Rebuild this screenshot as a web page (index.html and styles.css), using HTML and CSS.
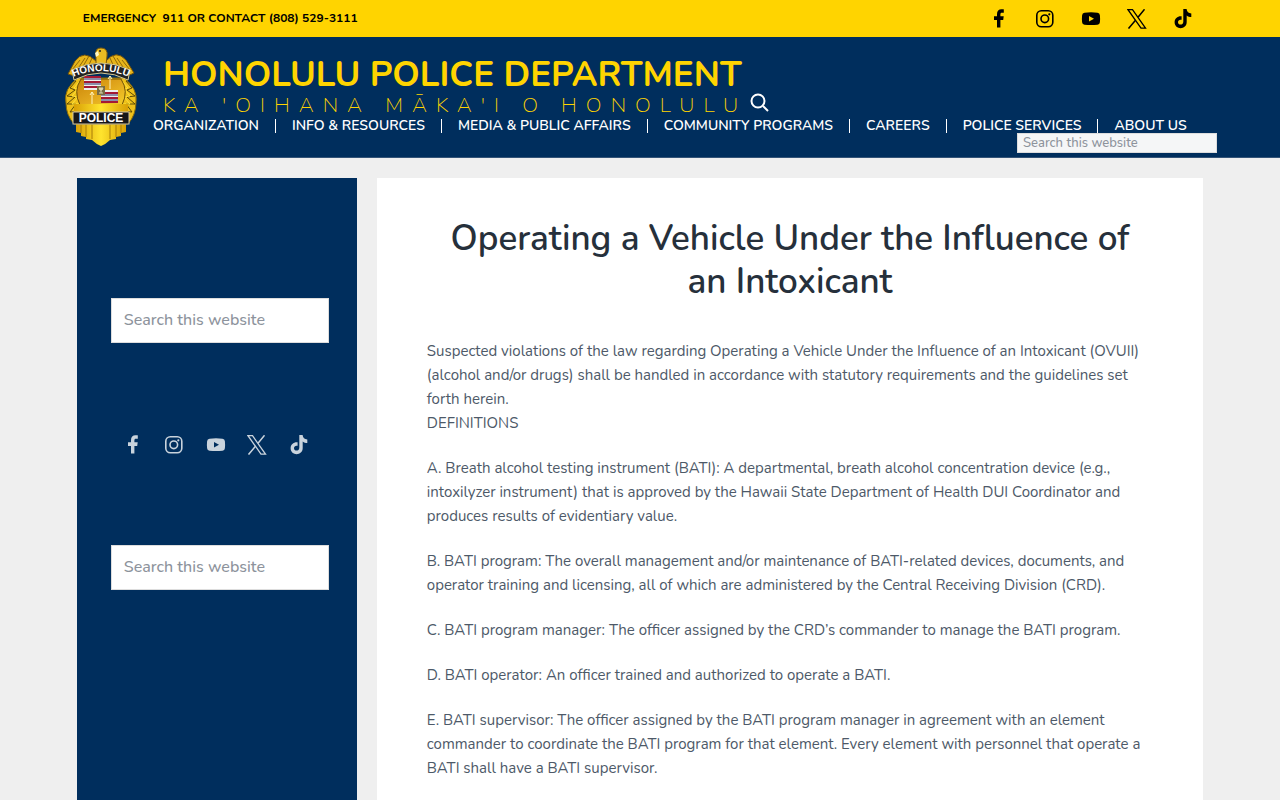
FILE: index.html
```html
<!DOCTYPE html>
<html lang="en">
<head>
    <meta charset="utf-8">
    <title>Operating a Vehicle Under the Influence of an Intoxicant</title>
    <link rel="stylesheet" href="styles.css">
</head>
<body>
    <!-- shared social icons -->
    <svg class="icon-defs" aria-hidden="true">
        <symbol id="icon-facebook" viewBox="0 0 20 20">
            <path d="M8 18.500V11H5V7.300h3V5.200C8 1.900 9.800.300 12.300.300c1.200 0 2.500.100 2.500.100v3.300h-1.700c-1.400 0-1.700.700-1.700 1.600v2h3.300L14.200 11h-2.800v7.500z"/>
        </symbol>
        <symbol id="icon-instagram" viewBox="0 0 20 20">
            <rect x="1.800" y="1.800" width="16" height="16" rx="4.500" fill="none" stroke="currentColor" stroke-width="1.600"/>
            <circle cx="9.800" cy="9.800" r="3.800" fill="none" stroke="currentColor" stroke-width="1.600"/>
            <circle cx="14.300" cy="5.300" r="1.100"/>
        </symbol>
        <symbol id="icon-youtube" viewBox="0 0 20 20">
            <path fill-rule="evenodd" d="M3.500 3.700Q10 2.900 16.500 3.700Q18.700 3.900 18.900 6.200Q19.300 9.700 18.900 13.200Q18.700 15.500 16.500 15.700Q10 16.300 3.500 15.700Q1.300 15.500 1.100 13.200Q.7 9.700 1.100 6.200Q1.300 3.900 3.500 3.700zM8 7v5.400l5-2.700z"/>
        </symbol>
        <symbol id="icon-x" viewBox="0 0 20 20">
            <path d="M1 .7h4.500L18.500 19.200H14z" fill="none" stroke="currentColor" stroke-width="1.300"/>
            <path d="M17.500.3L11 8.300M8.500 11.300L1.500 19.600" fill="none" stroke="currentColor" stroke-width="1.500"/>
        </symbol>
        <symbol id="icon-tiktok" viewBox="0 0 20 20">
            <path d="M10.300 0h3.300c.2 2.700 1.900 4.300 4.700 4.500v3.400c-1.700 0-3.300-.5-4.600-1.500v6.700c0 8-12 8.100-12.100.2 0-4 3.400-6.500 7-6v3.500c-2-.6-3.600.6-3.600 2.400 0 3.300 5.300 3.200 5.300-.5z"/>
        </symbol>
    </svg>

    <div class="top-bar">
        <div class="top-wrap">
            <span class="emergency">EMERGENCY&nbsp; 911 OR CONTACT (808) 529-3111</span>
            <div class="top-social">
                <a href="#" aria-label="Facebook"><svg><use href="#icon-facebook"/></svg></a>
                <a href="#" aria-label="Instagram"><svg><use href="#icon-instagram"/></svg></a>
                <a href="#" aria-label="YouTube"><svg><use href="#icon-youtube"/></svg></a>
                <a href="#" aria-label="X"><svg><use href="#icon-x"/></svg></a>
                <a href="#" aria-label="TikTok"><svg><use href="#icon-tiktok"/></svg></a>
            </div>
        </div>
    </div>

    <header class="site-header">
        <div class="header-wrap">
            <a href="#" class="badge" aria-label="Honolulu Police Department">
                <svg viewBox="0 0 72 100">
                    <defs>
                        <linearGradient id="gold" x1="0" x2="1" y1="0" y2="0">
                            <stop offset="0" stop-color="#d9a005"/>
                            <stop offset=".5" stop-color="#ffe42e"/>
                            <stop offset="1" stop-color="#d9a005"/>
                        </linearGradient>
                        <linearGradient id="disc" x1="0" x2="1" y1="0" y2="1">
                            <stop offset="0" stop-color="#c98408"/>
                            <stop offset=".5" stop-color="#e0a51c"/>
                            <stop offset="1" stop-color="#f5cf2a"/>
                        </linearGradient>
                        <path id="arc" d="M6 31Q36 17 66 31"/>
                    </defs>
                    <!-- lower shield -->
                    <path d="M11 74h50v11l-5 1v3l-5 1v2l-6 1q-4 4-9 6q-5-2-9-6l-6-1v-2l-5-1v-3l-5-1z" fill="url(#gold)"/>
                    <path d="M16 77v9M21 77v13M27 77v15M45 77v15M51 77v13M56 77v9" stroke="#a87c08"/>
                    <!-- wreath -->
                    <path d="M13 31Q-2 42 1 56Q1 68 9 77h54Q71 68 71 55Q73 42 59 31z" fill="#eec01a" stroke="#8a6b08"/>
                    <path d="M11 34l-6 7 5 2-8 6 8 1-8 7 9 0-6 8 9-1M61 34l6 7-5 2 8 6-8 1 8 7-9 0 6 8-9-1" fill="none" stroke="#5d4a05"/>
                    <path d="M14 35l-5 6 4 1-6 7 6 1-6 7 8 0M58 35l5 6-4 1 6 7-6 1 6 7-8 0" fill="none" stroke="#ffe23a"/>
                    <path d="M16 32Q8 44 15 58h42Q64 44 56 32z" fill="url(#disc)" stroke="#705307"/>
                    <!-- flags and staffs -->
                    <path d="M19 29h17v14H19z" fill="#eee"/>
                    <path d="M19 30h17M19 35h17M19 40h17" stroke="#a51935" stroke-width="2"/>
                    <path d="M19 32h17M19 37h17" stroke="#292b67"/>
                    <path d="M36 43h17v13H36z" fill="#eee"/>
                    <path d="M36 46h17M36 51h17M36 55h17" stroke="#a51935" stroke-width="2"/>
                    <path d="M36 48h17M36 53h17" stroke="#292b67"/>
                    <path d="M45 29v13M27 45v12M43 32l2-3 2 3M25 48l2-3 2 3" stroke="#fff4bd" fill="none"/>
                    <rect x="32" y="39" width="8" height="9" fill="#776c45"/>
                    <path d="M34 41h4l-1 2h-2zM36 43v3M34 46h4" fill="#ddd6b0" stroke="#ddd6b0"/>
                    <rect x="9" y="57" width="54" height="8" fill="url(#gold)"/>
                    <!-- eagle -->
                    <path d="M31 14Q19 2 10 14L3 27Q11 31 17 22L31 20h10l14 2q7 9 14 4L61 13Q51 2 41 14z" fill="#e8b51a" stroke="#705009"/>
                    <path d="M7 23l8-10M12 23l8-12M17 21l7-12M23 20l4-9M65 23l-8-10M60 23l-8-12M55 21l-7-12M49 20l-4-9" stroke="#8f690a"/>
                    <path d="M31 16V7q-1-6 5-6q7 0 6 8l-1 9-5 3z" fill="#e9bb22" stroke="#7e5b0a"/>
                    <path d="M33 4l-3 2 1 4 3-2z" fill="#fff8c5"/>
                    <circle cx="35" cy="4" r="1" fill="#222"/>
                    <path d="M7 23Q36 9 65 23l-2 10Q36 19 9 33z" fill="#222" stroke="#d8c990"/>
                    <text class="badge-arc"><textPath href="#arc" startOffset="50%" text-anchor="middle">HONOLULU</textPath></text>
                    <rect x="8" y="65" width="56" height="12" fill="#171719" stroke="#d2c7a4"/>
                    <text class="badge-name" x="36" y="75" text-anchor="middle">POLICE</text>
                </svg>
            </a>
            <div class="header-main">
                <div class="brand">
                    <div class="brand-text">
                        <div class="site-title">HONOLULU POLICE DEPARTMENT</div>
                        <div class="site-tagline">KA 'OIHANA MĀKA'I O HONOLULU</div>
                    </div>
                    <button class="search-toggle" aria-label="Search">
                        <svg viewBox="0 0 20 20"><circle cx="8" cy="8" r="6.500"/><path d="M13 13l5 5"/></svg>
                    </button>
                </div>
                <nav class="main-nav">
                    <a href="#">ORGANIZATION</a>
                    <a href="#">INFO &amp; RESOURCES</a>
                    <a href="#">MEDIA &amp; PUBLIC AFFAIRS</a>
                    <a href="#">COMMUNITY PROGRAMS</a>
                    <a href="#">CAREERS</a>
                    <a href="#">POLICE SERVICES</a>
                    <a href="#">ABOUT US</a>
                </nav>
            </div>
            <input type="search" class="header-search" placeholder="Search this website" aria-label="Search this website">
        </div>
    </header>

    <div class="site-inner">
        <aside class="sidebar">
            <input type="search" class="side-search" placeholder="Search this website" aria-label="Search this website">
            <div class="side-social">
                <a href="#" aria-label="Facebook"><svg><use href="#icon-facebook"/></svg></a>
                <a href="#" aria-label="Instagram"><svg><use href="#icon-instagram"/></svg></a>
                <a href="#" aria-label="YouTube"><svg><use href="#icon-youtube"/></svg></a>
                <a href="#" aria-label="X"><svg><use href="#icon-x"/></svg></a>
                <a href="#" aria-label="TikTok"><svg><use href="#icon-tiktok"/></svg></a>
            </div>
            <input type="search" class="side-search" placeholder="Search this website" aria-label="Search this website">
        </aside>

        <main class="content">
            <h1>Operating a Vehicle Under the Influence of an Intoxicant</h1>
            <p>Suspected violations of the law regarding Operating a Vehicle Under the Influence of an Intoxicant (OVUII) (alcohol and/or drugs) shall be handled in accordance with statutory requirements and the guidelines set forth herein.<br>DEFINITIONS</p>
            <p>A. Breath alcohol testing instrument (BATI): A departmental, breath alcohol concentration device (e.g., intoxilyzer instrument) that is approved by the Hawaii State Department of Health DUI Coordinator and produces results of evidentiary value.</p>
            <p>B. BATI program: The overall management and/or maintenance of BATI-related devices, documents, and operator training and licensing, all of which are administered by the Central Receiving Division (CRD).</p>
            <p>C. BATI program manager: The officer assigned by the CRD’s commander to manage the BATI program.</p>
            <p>D. BATI operator: An officer trained and authorized to operate a BATI.</p>
            <p>E. BATI supervisor: The officer assigned by the BATI program manager in agreement with an element commander to coordinate the BATI program for that element. Every element with personnel that operate a BATI shall have a BATI supervisor.</p>
        </main>
    </div>
</body>
</html>
```
FILE: styles.css
```css
* {
    box-sizing: border-box;
}

body {
    margin: 0;
    background-color: #efefef;
    color: #4d5968;
    font-family: Nunito, Lato, sans-serif;
    font-size: 15px;
    line-height: 24px;
}

a {
    color: inherit;
    text-decoration: none;
}

.icon-defs {
    position: absolute;
    width: 0;
    height: 0;
}

.top-bar {
    background-color: #ffd400;
    color: #000;
}

.top-wrap {
    display: flex;
    justify-content: space-between;
    align-items: center;
    width: 88%;
    height: 37px;
    margin: 0 auto;
    padding: 0 10px 0 6px;
}

.emergency {
    padding-bottom: 2px;
    font-size: 12px;
    font-weight: 700;
}

.top-social, .side-social {
    display: flex;
}

.top-social {
    gap: 26px;
}

.top-social a, .side-social a {
    display: flex;
}

.top-social svg, .side-social svg {
    width: 20px;
    height: 20px;
    fill: currentColor;
}

.site-header {
    background-color: #002e5d;
    border-bottom: 1px solid #345478;
}

.header-wrap {
    display: flex;
    position: relative;
    width: 90%;
    height: 120px;
    margin: 0 auto;
    padding-top: 10px;
}

.badge {
    width: 74px;
    height: 100px;
}

.badge svg {
    width: 74px;
    height: 100px;
}

.badge-arc {
    fill: #fff;
    font: bold 10px "Liberation Sans", sans-serif;
}

.badge-name {
    fill: #fff;
    font: bold 12px "Liberation Sans", sans-serif;
}

.header-main {
    padding-left: 15px;
}

.brand {
    display: flex;
    align-items: flex-end;
    gap: 3px;
    padding: 8px 0 0 10px;
}

.site-title {
    color: #ffd400;
    font-size: 35px;
    font-weight: 700;
    line-height: 39px;
    white-space: nowrap;
}

.site-tagline {
    color: #ffd400;
    font-size: 21px;
    font-weight: 200;
    line-height: 22px;
    letter-spacing: 9px;
    white-space: nowrap;
}

.search-toggle {
    height: 20px;
    margin-bottom: 3px;
    padding: 0;
    border: 0;
    background: none;
}

.search-toggle svg {
    width: 20px;
    height: 20px;
    fill: none;
    stroke: #fff;
    stroke-width: 2;
}

.main-nav {
    display: flex;
    margin-top: 3px;
    color: #fff;
    font-size: 14px;
    font-weight: 600;
    line-height: 14px;
    white-space: nowrap;
}

.main-nav a + a {
    margin-left: 16px;
    padding-left: 16px;
    border-left: 1px solid #fff;
}

input {
    border: 1px solid #ddd;
    border-radius: 0;
    background-color: #fff;
    font-family: inherit;
    font-weight: 500;
}

input::placeholder {
    color: #8d939c;
}

.header-search {
    position: absolute;
    right: -1px;
    bottom: 4px;
    width: 200px;
    height: 20px;
    padding: 0 5px;
    background-color: #f5f6f7;
    font-size: 13px;
}

.site-inner {
    display: flex;
    gap: 20px;
    width: 88%;
    min-height: 100vh;
    margin: 20px auto 0;
}

.sidebar {
    flex: 0 0 280px;
    padding: 120px 28px 0 34px;
    background-color: #002e5d;
}

.side-search {
    display: block;
    width: 100%;
    height: 45px;
    padding: 0 12px 2px;
    font-size: 16px;
}

.side-social {
    justify-content: space-between;
    margin: 92px 20px 90px 12px;
    color: #c9d3dc;
}

.content {
    flex: 1;
    padding: 39px 50px;
    background-color: #fff;
}

h1 {
    margin: 0 0 36px;
    color: #26303b;
    font-size: 35px;
    font-weight: 650;
    line-height: 43px;
    text-align: center;
}

p {
    margin: 0 0 21px;
}
```
